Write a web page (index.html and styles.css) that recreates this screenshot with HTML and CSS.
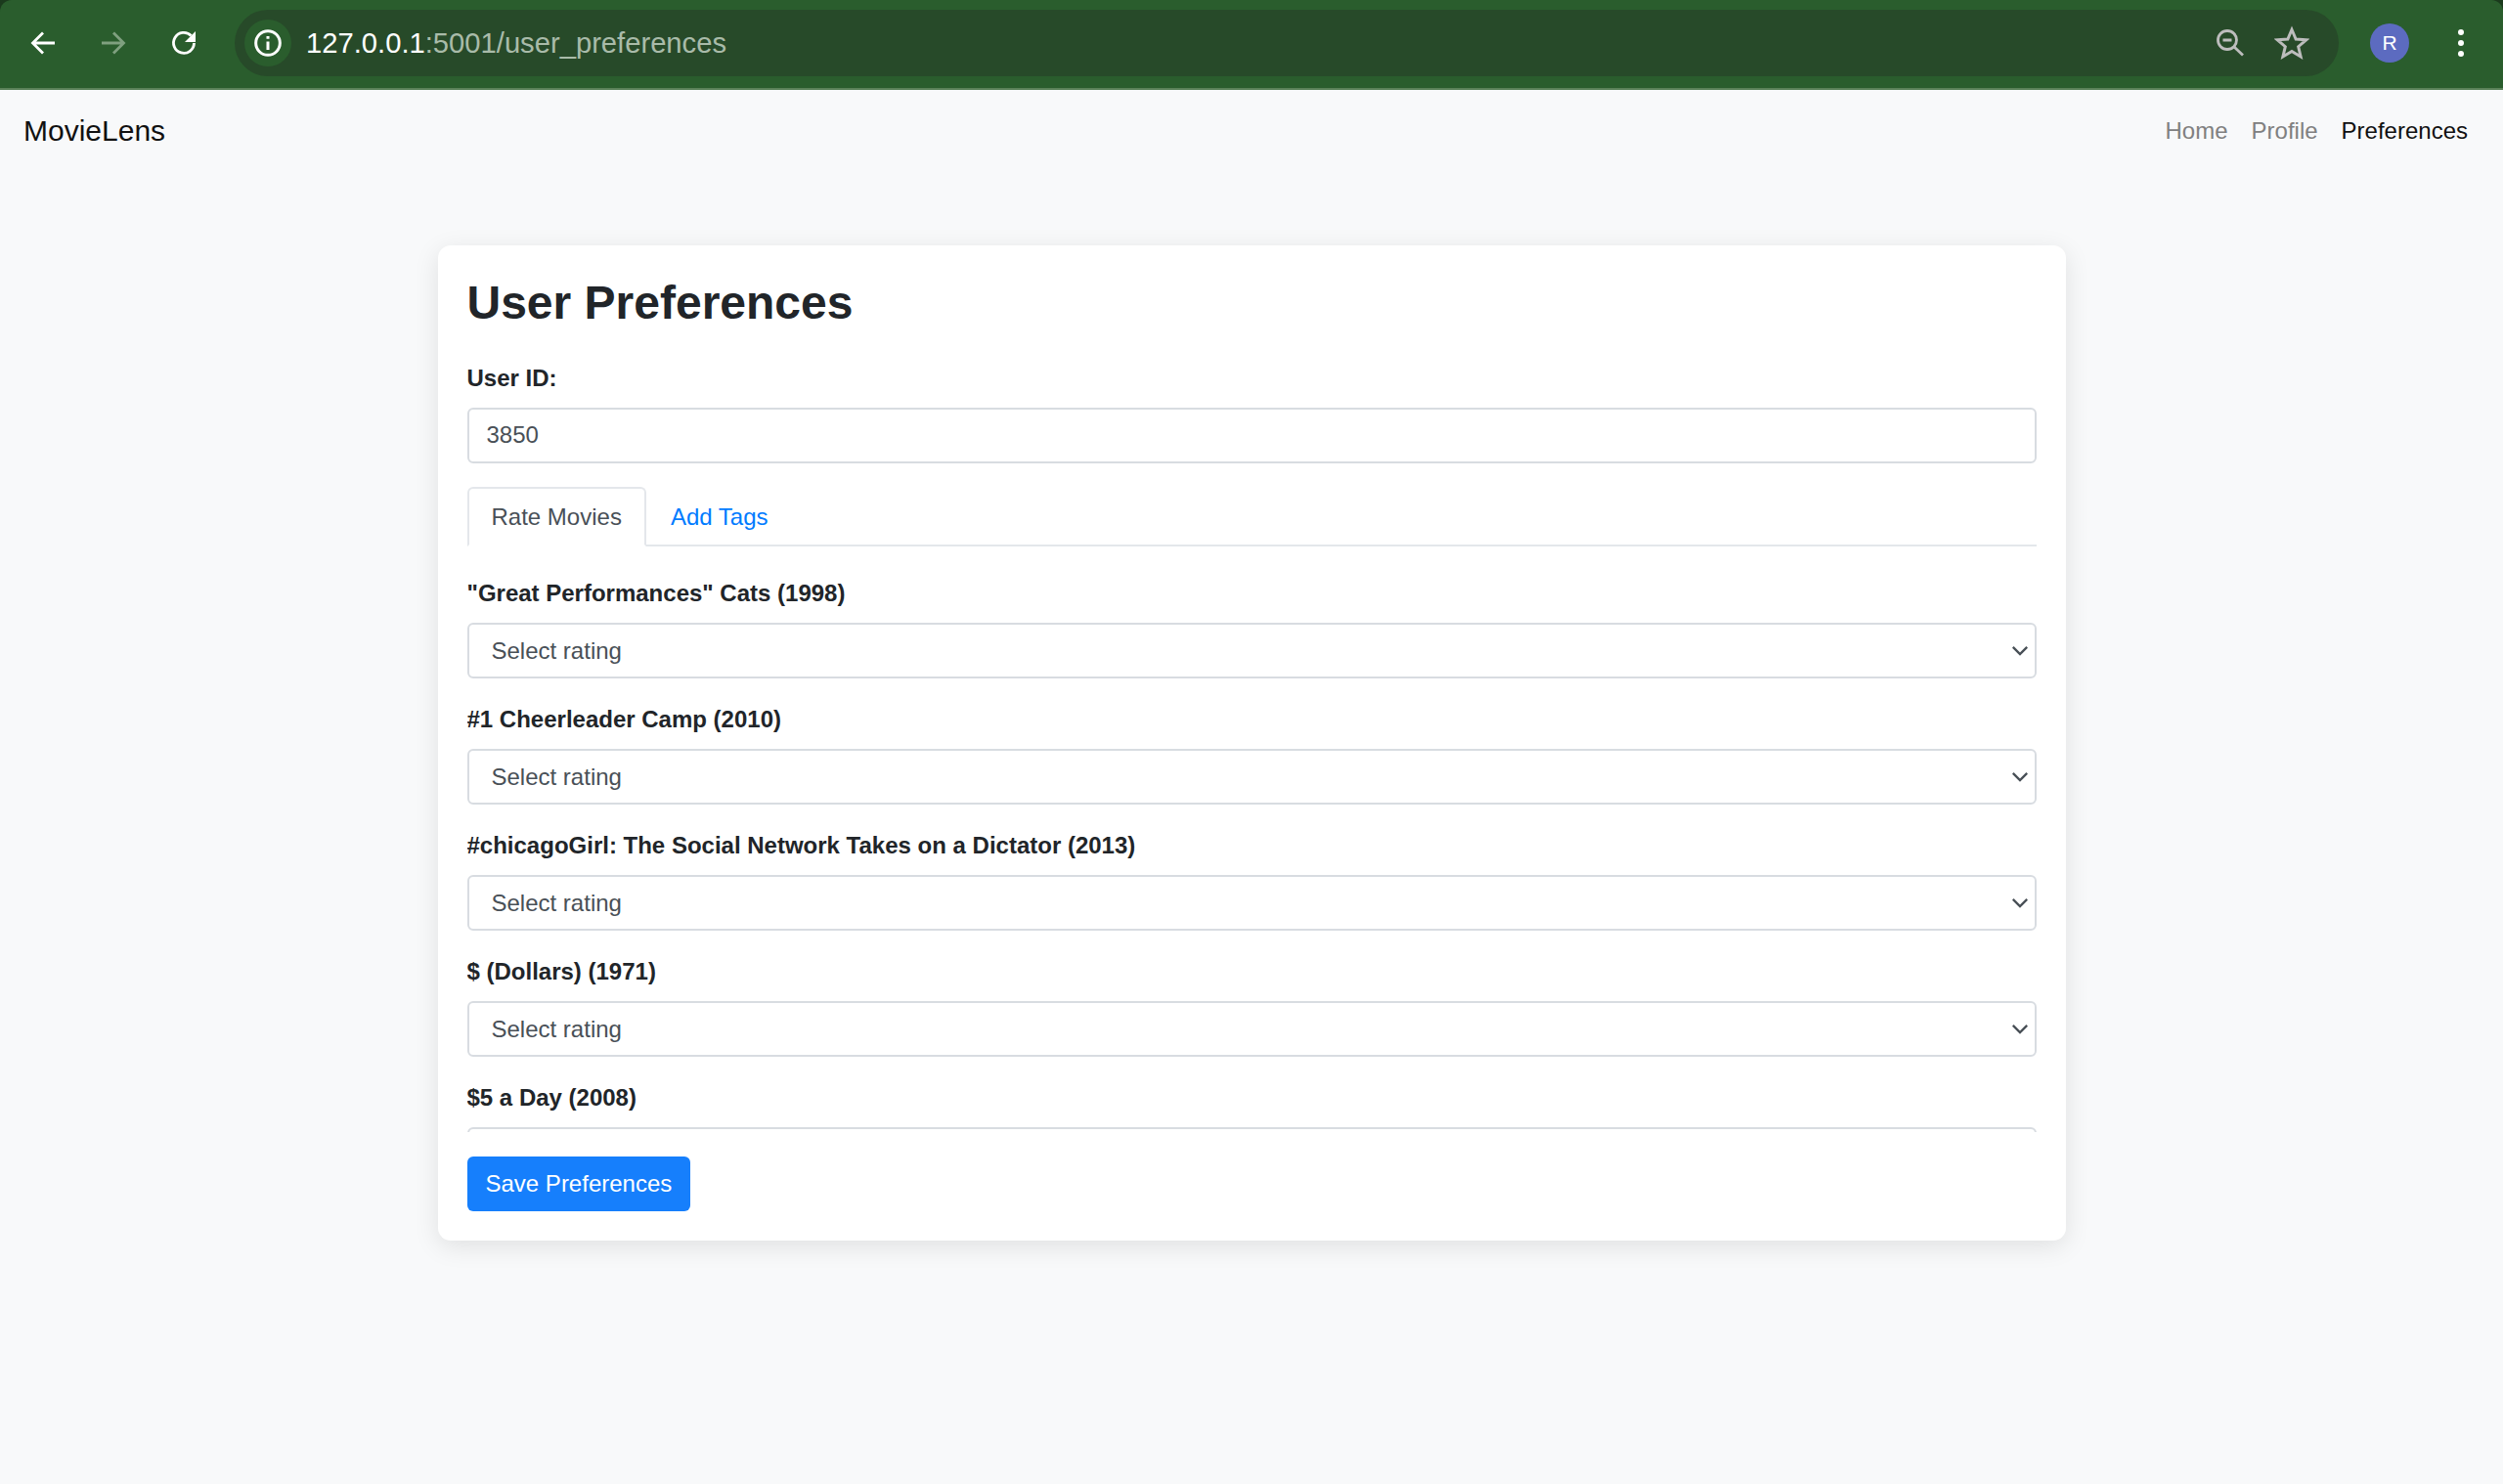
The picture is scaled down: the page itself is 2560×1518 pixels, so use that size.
FILE: index.html
```html
<!DOCTYPE html>
<html lang="en">

<head>
    <meta charset="UTF-8">
    <title>User Preferences</title>
    <link rel="stylesheet" href="styles.css">
</head>

<body>
    <div class="window-top">
        <div class="toolbar">
            <svg class="tool-icon" viewBox="0 0 32 32"><path d="M28 16H7M16 5.500 5.500 16 16 26.500" /></svg>
            <svg class="tool-icon faded" viewBox="0 0 32 32"><path d="M4 16h21M16 5.500 26.500 16 16 26.500" /></svg>
            <svg class="tool-icon" viewBox="0 0 32 32">
                <path d="M23.500 8.500A10.500 10.500 0 1 0 26.500 16" />
                <path class="solid" d="M28 4v11H17z" />
            </svg>
            <div class="omnibox">
                <span class="site-chip">
                    <svg class="info-icon" viewBox="0 0 28 28">
                        <circle cx="14" cy="14" r="11.500" />
                        <path d="M14 12.500v8M14 7.500v2.500" />
                    </svg>
                </span>
                <span class="url"><span class="url-host">127.0.0.1</span>:5001/user_preferences</span>
                <svg class="omni-icon zoom-icon" viewBox="0 0 30 30"><circle cx="12" cy="12" r="9.500" /><path d="M7.500 12h9M18.500 18.500 28 27.500" /></svg>
                <svg class="omni-icon star-icon" viewBox="0 0 34 34"><path d="M17 4l3.900 9.200 10 .8-7.600 6.500 2.300 9.700L17 25l-8.600 5.200 2.300-9.700L3.100 14l10-.8z" /></svg>
            </div>
            <span class="avatar">R</span>
            <span class="menu-dots"><i></i><i></i><i></i></span>
        </div>
    </div>

    <nav class="navbar">
        <a class="brand" href="#">MovieLens</a>
        <ul class="nav-links">
            <li><a href="#">Home</a></li>
            <li><a href="#">Profile</a></li>
            <li><a class="active" href="#">Preferences</a></li>
        </ul>
    </nav>

    <main class="card">
        <h2>User Preferences</h2>
        <form>
            <label for="user_id">User ID:</label>
            <input class="field" type="text" id="user_id" value="3850">

            <ul class="tabs">
                <li class="tab active">Rate Movies</li>
                <li class="tab">Add Tags</li>
            </ul>

            <div class="movie-list">
                <div class="movie">
                    <label for="m1">"Great Performances" Cats (1998)</label>
                    <select class="field rating" id="m1"><option>Select rating</option></select>
                </div>
                <div class="movie">
                    <label for="m2">#1 Cheerleader Camp (2010)</label>
                    <select class="field rating" id="m2"><option>Select rating</option></select>
                </div>
                <div class="movie">
                    <label for="m3">#chicagoGirl: The Social Network Takes on a Dictator (2013)</label>
                    <select class="field rating" id="m3"><option>Select rating</option></select>
                </div>
                <div class="movie">
                    <label for="m4">$ (Dollars) (1971)</label>
                    <select class="field rating" id="m4"><option>Select rating</option></select>
                </div>
                <div class="movie">
                    <label for="m5">$5 a Day (2008)</label>
                    <select class="field rating" id="m5"><option>Select rating</option></select>
                </div>
            </div>

            <button class="btn" type="button">Save Preferences</button>
        </form>
    </main>
</body>

</html>
```

FILE: styles.css
```css
* {
    box-sizing: border-box;
    margin: 0;
    padding: 0;
    font-family: "Liberation Sans", Arial, sans-serif;
}

body {
    background: #f8f9fa;
    color: #212529;
    font-size: 26px;
    line-height: 39px;
    min-height: 1518px;
}

/* browser chrome */
.window-top {
    background: #1b3a1d;
}

.toolbar {
    display: flex;
    align-items: center;
    height: 92px;
    padding: 0 40px 2px 28px;
    border-radius: 12px 12px 0 0;
    background: #2a5d2d;
    border-bottom: 2px solid #5b8259;
}

.tool-icon {
    width: 32px;
    height: 32px;
    margin-right: 40px;
    fill: none;
    stroke: #fff;
    stroke-width: 2.800;
}

.tool-icon.faded {
    stroke: #7fa07f;
}

.tool-icon:nth-child(3) {
    margin-right: 36px;
}

.tool-icon .solid {
    fill: #fff;
    stroke: none;
}

.omnibox {
    display: flex;
    align-items: center;
    flex: 1;
    height: 68px;
    padding: 0 0 0 10px;
    border-radius: 34px;
    background: #274a29;
}

.site-chip {
    display: flex;
    align-items: center;
    justify-content: center;
    width: 48px;
    height: 48px;
    border-radius: 50%;
    background: #2a5d2d;
}

.info-icon {
    width: 30px;
    height: 30px;
    fill: none;
    stroke: #fff;
    stroke-width: 2.800;
}

.url {
    flex: 1;
    margin-left: 15px;
    font-size: 29.200px;
    color: #a9bba9;
}

.url-host {
    color: #fff;
}

.omni-icon {
    fill: none;
    stroke: #bdbdbd;
    stroke-width: 2.800;
}

.zoom-icon {
    width: 30px;
    height: 30px;
    margin-right: 30px;
}

.star-icon {
    width: 36px;
    height: 36px;
    margin-right: 30px;
}

.avatar {
    width: 40px;
    height: 40px;
    margin-left: 32px;
    border-radius: 50%;
    background: #5c6bc0;
    color: #fff;
    font-size: 21px;
    line-height: 40px;
    text-align: center;
}

.menu-dots {
    display: flex;
    flex-direction: column;
    gap: 5px;
    margin-left: 50px;
}

.menu-dots i {
    width: 6px;
    height: 6px;
    border-radius: 50%;
    background: #fff;
}

/* navbar */
.navbar {
    display: flex;
    justify-content: space-between;
    align-items: center;
    height: 86px;
    padding: 0 36px 3px 24px;
}

.brand {
    color: #111;
    font-size: 30px;
    text-decoration: none;
}

.nav-links {
    display: flex;
    gap: 24px;
    list-style: none;
}

.nav-links a {
    color: #808080;
    font-size: 24px;
    text-decoration: none;
}

.nav-links a.active {
    color: #111;
}

/* card */
.card {
    width: 1665px;
    margin: 73px auto 0;
    padding: 30px;
    border-radius: 13px;
    background: #fff;
    box-shadow: 0 6px 26px rgba(0, 0, 0, 0.1);
}

h2 {
    height: 84px;
    font-size: 48px;
    line-height: 58px;
}

label {
    display: block;
    margin-bottom: 9px;
    font-weight: bold;
    font-size: 24px;
    line-height: 43px;
}

.field {
    display: block;
    width: 100%;
    height: 57px;
    padding: 0 18px 2px;
    border: 2px solid #d8dce1;
    border-radius: 6px;
    background-color: #fff;
    color: #495057;
    font-size: 24px;
}

.rating {
    padding: 0 23px;
    appearance: none;
    background-image: url("data:image/svg+xml,%3Csvg xmlns='http://www.w3.org/2000/svg' viewBox='0 0 20 12'%3E%3Cpath d='M2 2l8 8 8-8' fill='none' stroke='%23495057' stroke-width='2.600'/%3E%3C/svg%3E");
    background-repeat: no-repeat;
    background-position: right 6px center;
    background-size: 18px 11px;
}

/* tabs */
.tabs {
    display: flex;
    height: 61px;
    margin-top: 24px;
    border-bottom: 2px solid #e4e7eb;
    list-style: none;
}

.tab {
    height: 61px;
    padding: 9px 23px;
    border: 2px solid transparent;
    border-radius: 6px 6px 0 0;
    color: #007bff;
    font-size: 24px;
}

.tab.active {
    border-color: #e4e7eb #e4e7eb #fff;
    background: #fff;
    color: #495057;
}

.movie-list {
    height: 599px;
    padding-top: 26px;
    overflow: hidden;
}

.movie {
    margin-bottom: 20px;
}

.btn {
    display: block;
    height: 56px;
    margin-top: 25px;
    padding: 0 19px;
    border: 0;
    border-radius: 6px;
    background: #167ffc;
    color: #fff;
    font-size: 24px;
}
```
